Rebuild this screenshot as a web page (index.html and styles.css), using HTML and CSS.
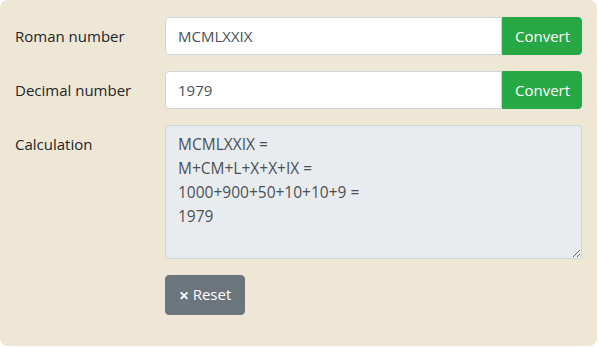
FILE: index.html
```html
<!DOCTYPE html>
<html lang="en">
<head>
    <meta charset="UTF-8">
    <meta name="viewport" content="width=device-width, initial-scale=1.0">
    <title>Roman Numeral Converter</title>
    <link rel="stylesheet" href="styles.css">
</head>
<body>
    <div class="panel">
        <div class="form-row">
            <label class="form-label" for="roman">Roman number</label>
            <div class="input-group">
                <input type="text" id="roman" class="form-input" value="MCMLXXIX">
                <button class="btn btn-green">Convert</button>
            </div>
        </div>

        <div class="form-row">
            <label class="form-label" for="decimal">Decimal number</label>
            <div class="input-group">
                <input type="text" id="decimal" class="form-input" value="1979">
                <button class="btn btn-green">Convert</button>
            </div>
        </div>

        <div class="form-row">
            <label class="form-label" for="calc">Calculation</label>
            <textarea id="calc" class="form-textarea" readonly>MCMLXXIX =
M+CM+L+X+X+IX =
1000+900+50+10+10+9 =
1979</textarea>
        </div>

        <div class="form-row">
            <div class="form-label"></div>
            <div>
                <button class="btn btn-grey"><span class="times">&#x2715;</span> Reset</button>
            </div>
        </div>
    </div>
</body>
</html>
```

FILE: styles.css
```css
* {
    box-sizing: border-box;
}
html, body {
    margin: 0;
    background: #ffffff;
}
body {
    font-family: "Open Sans", "Noto Sans", sans-serif;
    font-size: 15px;
    line-height: 24px;
    color: #212529;
}
.panel {
    width: 597px;
    height: 346px;
    background-color: #efe7d6;
    border-radius: 8px;
    padding: 17px 15px 0 15px;
}
.form-row {
    display: grid;
    grid-template-columns: 150px 1fr;
    margin-bottom: 16px;
}
.form-label {
    padding-top: 7px;
    padding-bottom: 7px;
}
.input-group {
    display: flex;
}
.form-input {
    flex: 1;
    height: 38px;
    padding: 6px 12px;
    font: inherit;
    color: #495057;
    background: #ffffff;
    border: 1px solid #ced4da;
    border-radius: 4px 0 0 4px;
    outline: none;
}
.btn {
    font: inherit;
    border: 1px solid transparent;
    border-radius: 4px;
    padding: 6px 12px;
    color: #ffffff;
    cursor: pointer;
}
.btn-green {
    width: 80px;
    background-color: #28a745;
    border-color: #28a745;
    border-radius: 0 4px 4px 0;
}
.btn-grey {
    width: 80px;
    height: 40px;
    padding: 6px 10px;
    background-color: #6c757d;
    border-color: #6c757d;
}
.times {
    font-size: 12px;
    font-weight: bold;
}
.form-textarea {
    height: 134px;
    padding: 6px 12px;
    font: inherit;
    font-size: 15.5px;
    color: #495057;
    background-color: #e9ecef;
    border: 1px solid #ced4da;
    border-radius: 4px;
    resize: vertical;
    outline: none;
}
```
